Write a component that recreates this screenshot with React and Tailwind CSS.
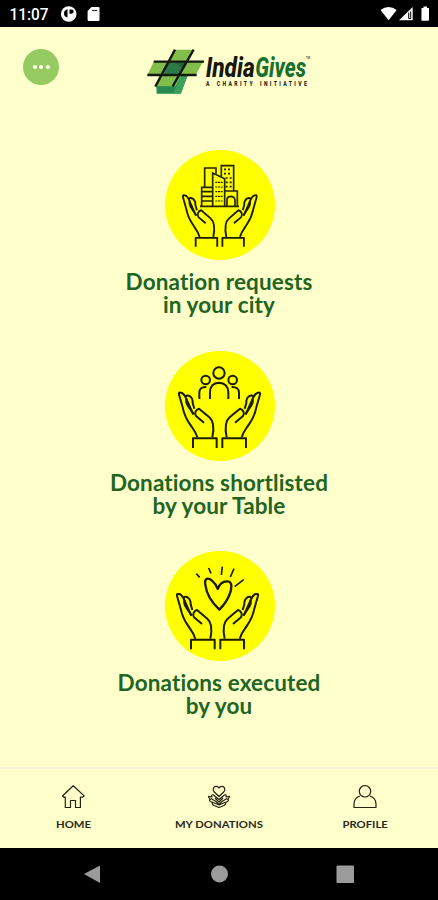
import React from 'react';

function StatusBar() {
  return (
    <header className="flex h-[27px] shrink-0 items-center bg-black">
      <svg width="438" height="27" viewBox="0 0 438 27" fill="#fff">
        <text x="9.5" y="20" fontSize="16.2" fontWeight="500" fontFamily="Roboto, sans-serif" textLength="39" lengthAdjust="spacingAndGlyphs">11:07</text>
        <circle cx="68.700" cy="14" r="7.800" />
        <path d="M67.500 9.200c-3 .7-4 3-3.300 5.500.4 1.400 1.300 2.300 3.300 2.800z" fill="#000" />
        <path d="M69.500 9.500h2a2 2 0 0 1 0 4.200h-2z" fill="#000" />
        <path d="M91.500 7h7q1 0 1 1v12q0 1-1 1H88.600q-1 0-1-1V11z" />
        <path d="M92 10.500h5" stroke="#333" strokeWidth="1.200" />
        <path d="M380.500 10q8-6.200 16.200 0L388.600 20.300z" />
        <path d="M399 20.300 412.700 7v13.300z" />
        <path d="M408.700 12.500v6h2v-7" fill="none" stroke="#000" strokeWidth="1" />
        <path d="M421.500 8h2V6.500h3.500V8h2v12q0 .8-.8.8h-6q-.8 0-.8-.8z" />
      </svg>
    </header>
  );
}

function Logo() {
  return (
    <svg width="180" height="60" viewBox="0 0 540 180" role="img" aria-label="IndiaGives">
      <path d="M49 138h50l27-35h19l-24 58H50z" fill="#248a50" />
      <path d="M124 103h20l-21 58-22-1z" fill="#3ba05b" />
      <path d="M41 65h148l-22 40H22z" fill="#83bd4c" />
      <path d="M105 29h56l-54 110H46z" fill="#83bd4c" />
      <path d="M85 66h57l-21 39H71z" fill="#2d7a49" />
      <path d="M103 66h39l-12 22z" fill="#24633d" />
      <path d="M105 29 46 140M161 29 98 139M41 65h151M22 105h148" fill="none" stroke="#151a10" strokeWidth="7" />
      <g fontFamily="Roboto, sans-serif" fontWeight="800" fontStyle="italic" fontSize="80">
        <text x="197" y="112" fill="#16180f" textLength="147" lengthAdjust="spacingAndGlyphs">India</text>
        <text x="346" y="112" fill="#16702e" textLength="152" lengthAdjust="spacingAndGlyphs">Gives</text>
      </g>
      <text x="498" y="58" fill="#4a5940" fontFamily="Roboto, sans-serif" fontSize="8" fontWeight="700">TM</text>
      <g transform="translate(198 138) scale(.8 1)">
        <text x="0" y="0" fill="#25271b" fontFamily="Roboto, sans-serif" fontSize="19" fontWeight="900" textLength="378" wordSpacing="5">A CHARITY INITIATIVE</text>
      </g>
    </svg>
  );
}

function Hand() {
  return (
    <>
      <path d="M112 274C107 256 98 247 90 235C75 213 71 200 68 184L58 149Q54 138 62 140Q69 139 76 152L100 205" />
      <path d="M76 153Q81 145 90 151Q99 158 98 171L103 188M80 157Q76 166 83 178L101 205" />
      <path d="M132 230L108 210C102 201 108 190 117 188L148 214Q157 222 159 235Q162 252 157 274" />
      <path d="M99 306V277H170V306" />
    </>
  );
}

function Hands({ transform }) {
  return (
    <g fill="none" stroke="#1b1b00" strokeWidth="6" strokeLinejoin="round" transform={transform}>
      <Hand />
      <g transform="matrix(-1 0 0 1 357 0)"><Hand /></g>
    </g>
  );
}

function City() {
  return (
    <g fill="none" stroke="#252500" strokeWidth="5">
      <path d="M120 184H237M125 183V127H157M134 127V69H168V86M125 140h32M125 154h32M125 168h32" />
      <path d="M158 183V84L194 101V183M184 94V62H221V137M196 138H232V183M201 183V162Q203 154 213 154Q224 155 225 165V183" />
      <path d="M166 112h22M166 126h22M166 140h22M166 154h22M166 168h22" strokeWidth="3.500" strokeDasharray="6 2" />
      <path d="M192 73h22M192 86h22M197 99h18M197 112h18M197 125h18" strokeDasharray="6 6" />
    </g>
  );
}

function People() {
  return (
    <g fill="none" stroke="#1b1b00" strokeWidth="6">
      <circle cx="177" cy="81" r="17" />
      <circle cx="137" cy="102" r="13" />
      <circle cx="218" cy="102" r="13" />
      <path d="M150 159V138Q151 111 177 110Q203 111 205 138V159M118 159V141Q118 122 139 123M215 123Q237 122 237 141V159" />
    </g>
  );
}

function Heart() {
  return (
    <g fill="none" stroke="#1b1b00" strokeWidth="7" strokeLinejoin="round">
      <path d="M178 191C158 172 139 145 136 116C132 96 145 94 156 104Q168 114 173 129C178 115 188 105 203 106C219 107 215 130 208 147C201 165 190 179 178 191Z" />
      <path d="M109 83 119 94M146 66 153 82M187 62 184 87M222 68 211 93M251 101 224 122" strokeWidth="5" />
    </g>
  );
}

function Donation({ first, second, hands, children }) {
  return (
    <button className="flex h-[200.500px] w-full shrink-0 flex-col items-center">
      <svg width="120" height="120" viewBox="0 0 360 360" className="ml-[2px]">
        <circle cx="180" cy="180" r="165" fill="#ffff00" />
        {children}
        <Hands transform={hands} />
      </svg>
      <span className="mt-[5.400px] flex flex-col items-center whitespace-nowrap font-['Lato',sans-serif] text-[22.500px] font-bold leading-[23px] tracking-[0.13px] text-[#226522] [font-variant-ligatures:none]">
        <span className="block">{first}</span>
        <span className="block">{second}</span>
      </span>
    </button>
  );
}

function HomeIcon() {
  return (
    <svg width="26" height="26" viewBox="0 0 26 26" fill="none" stroke="#222314" strokeWidth="1.200" strokeLinejoin="round">
      <path d="M5.300 13v10.500H10.500v-7h5v7h4.900V13l2 .2 1.800-1.300L13.200 1.700 2.500 12l1.500 1.300z" />
    </svg>
  );
}

function GivingIcon() {
  return (
    <svg width="26" height="26" viewBox="0 0 26 26" fill="none" stroke="#222314" strokeWidth="1.200" strokeLinejoin="round">
      <path d="M13 12.500 8.300 8C5 4 10 0 13 4c3-4 8 0 4.700 4z" />
      <path d="M13 15.500 7.500 11Q5 10 6 13L2.500 12.300q0 2 2 3-2 .2 0 2.200l2 1q-1 1.500 1.500 3l5 2 5-2q2.500-1.500 1.500-3l2-1q2-2 0-2.200 2-1 2-3L20 13q1-3-1.500-2zM5 14.500l5 3 3 3 3-3 5-3M6 18l7 3 7-3M9 14l4 4 4-4" />
    </svg>
  );
}

function ProfileIcon() {
  return (
    <svg width="26" height="26" viewBox="0 0 26 26" fill="none" stroke="#222314" strokeWidth="1.200" strokeLinejoin="round">
      <circle cx="13" cy="7.300" r="5.700" />
      <path d="M8 12q-6 2-6 8v3.500h22V20q0-6-6-8" />
    </svg>
  );
}

function Tab({ icon, label }) {
  return (
    <button className="flex w-[146px] flex-col items-center pt-[15px]">
      {icon}
      <span className="mt-[6px] block scale-x-113 whitespace-nowrap font-['Lato',sans-serif] text-[10px] font-bold leading-[16px] text-[#29291b]">{label}</span>
    </button>
  );
}

export default function App() {
  return (
    <div className="flex h-[900px] w-[438px] flex-col overflow-hidden bg-[#ffffcc]">
      <StatusBar />
      <div className="flex h-[118px] shrink-0 items-start pl-[23px] pt-[13px]">
        <button aria-label="Menu" className="mt-[9px] flex size-9 items-center justify-center gap-[2.500px] rounded-full bg-[#96cb61]">
          <i className="size-1 rounded-full bg-[#ffffe8]" />
          <i className="size-1 rounded-full bg-[#ffffe8]" />
          <i className="size-1 rounded-full bg-[#ffffe8]" />
        </button>
        <div className="ml-[81px]"><Logo /></div>
      </div>
      <main className="flex h-[622px] shrink-0 flex-col">
        <Donation first="Donation requests" second="in your city" hands="translate(17 21) scale(.91 .93)"><City /></Donation>
        <Donation first="Donations shortlisted" second="by your Table"><People /></Donation>
        <Donation first="Donations executed" second="by you" hands="translate(-6 4)"><Heart /></Donation>
      </main>
      <nav className="flex h-[81px] shrink-0 border-t-2 border-[#f3f3dc]">
        <Tab icon={<HomeIcon />} label="HOME" />
        <Tab icon={<GivingIcon />} label="MY DONATIONS" />
        <Tab icon={<ProfileIcon />} label="PROFILE" />
      </nav>
      <footer className="flex h-[52px] shrink-0 items-center bg-black">
        <svg width="438" height="52" viewBox="0 0 438 52" fill="#9b9b9b">
          <path d="M84 26 100 17.500V35z" />
          <circle cx="219.500" cy="26" r="8.500" />
          <rect x="336.500" y="17.500" width="17.500" height="17.500" rx="1" />
        </svg>
      </footer>
    </div>
  );
}
